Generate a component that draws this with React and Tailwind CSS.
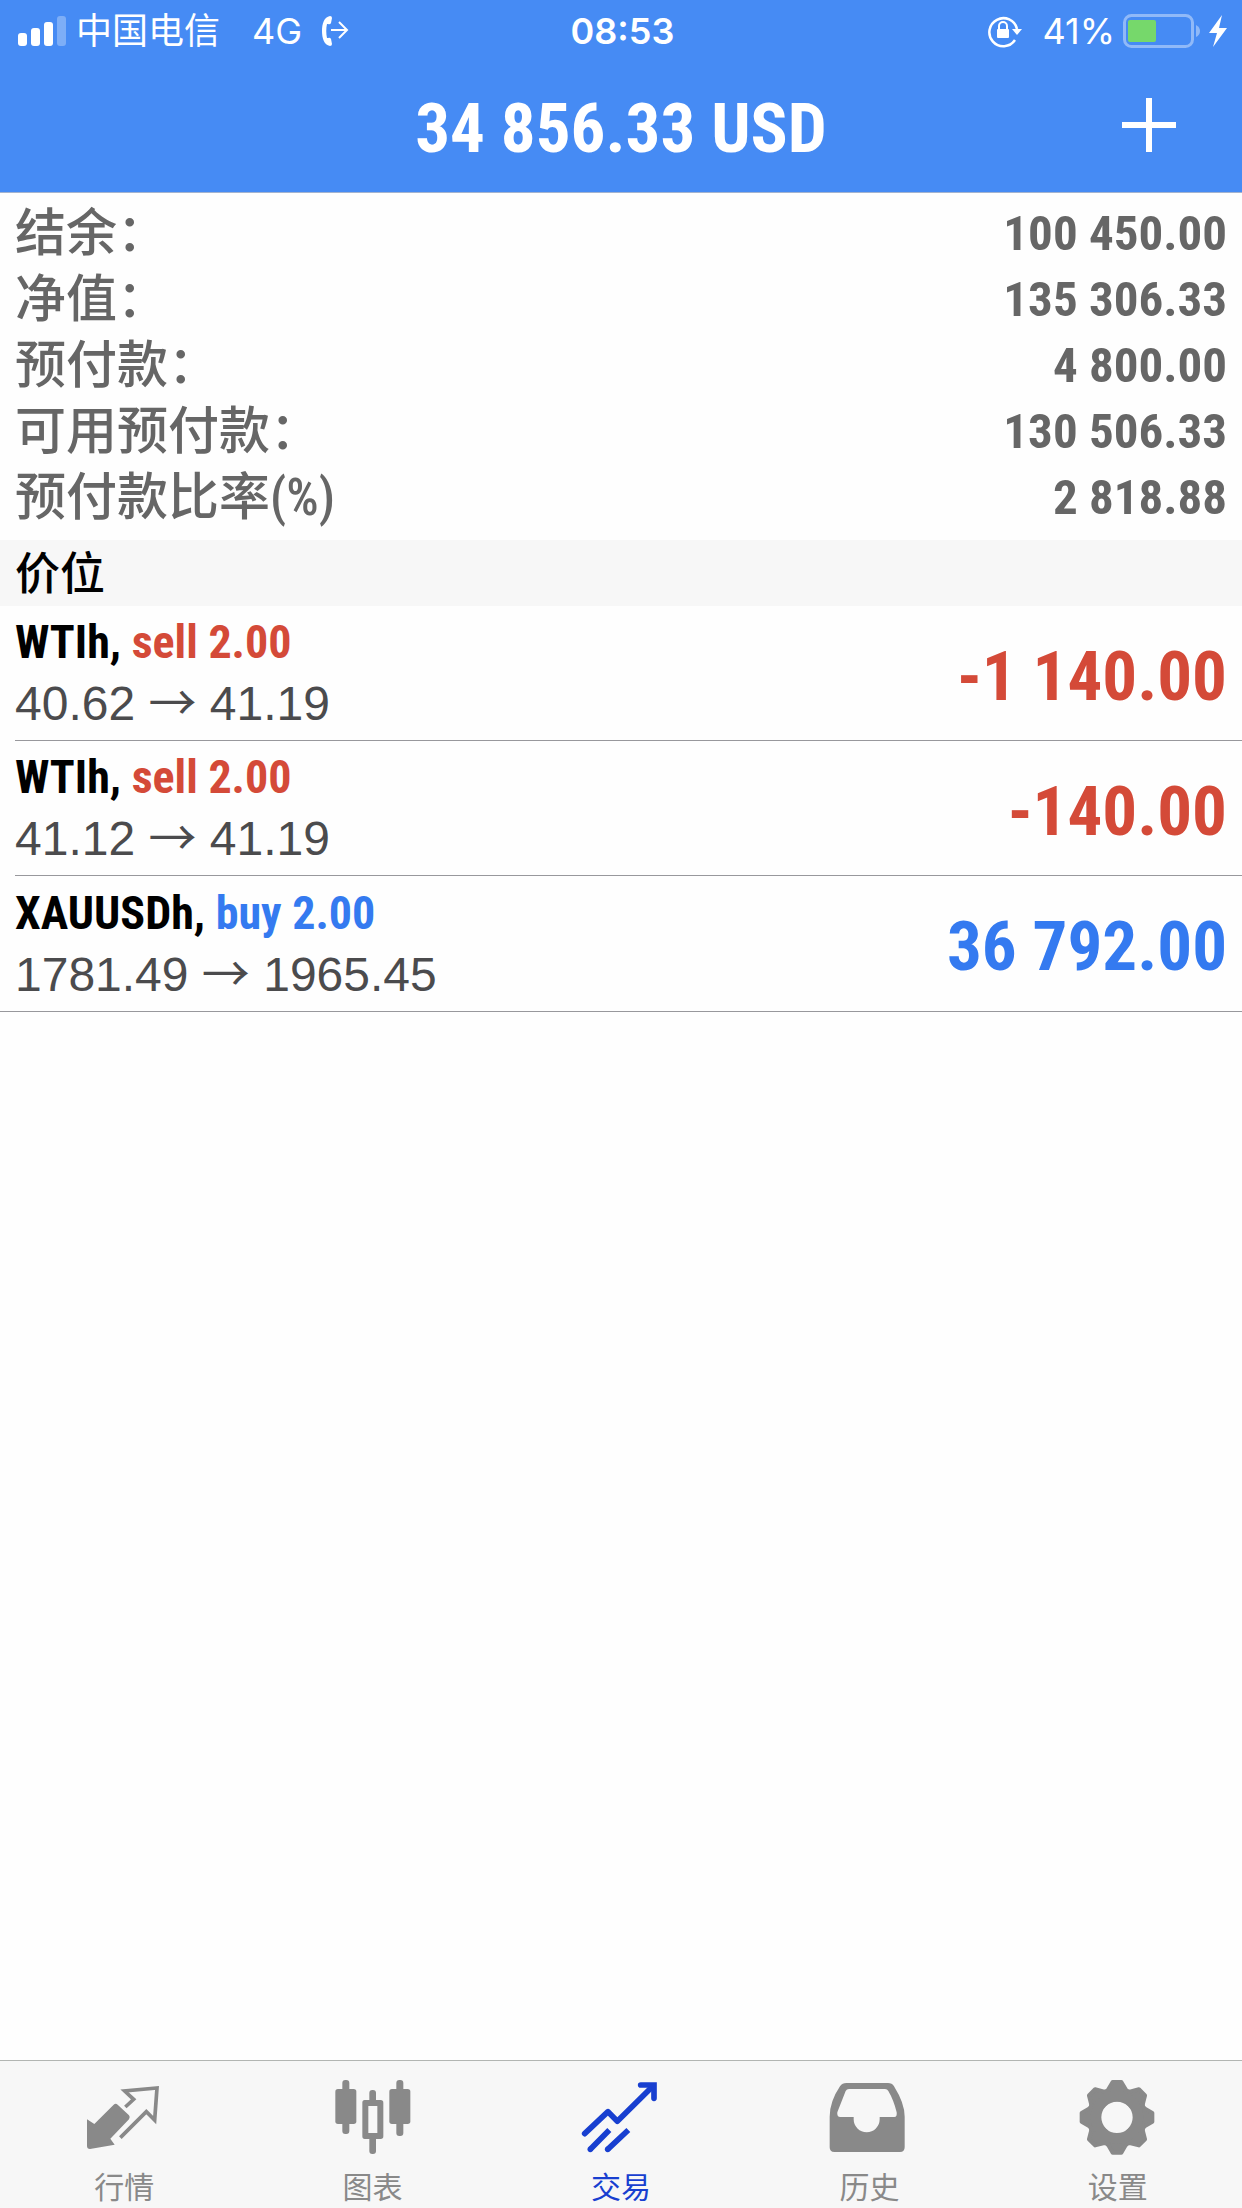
const NARROW = "font-['Liberation_Sans_Narrow','Roboto_Condensed','Noto_Sans_CJK_SC',sans-serif]"

const summary = [
    { label: '结余：', value: '100 450.00' },
    { label: '净值：', value: '135 306.33' },
    { label: '预付款：', value: '4 800.00' },
    { label: '可用预付款：', value: '130 506.33' },
    { label: '预付款比率(%)', value: '2 818.88' },
]

const positions = [
    { id: 1, symbol: 'WTIh', side: 'sell', volume: '2.00', open: '40.62', current: '41.19', profit: '-1 140.00' },
    { id: 2, symbol: 'WTIh', side: 'sell', volume: '2.00', open: '41.12', current: '41.19', profit: '-140.00' },
    { id: 3, symbol: 'XAUUSDh', side: 'buy', volume: '2.00', open: '1781.49', current: '1965.45', profit: '36 792.00' },
]

const tabs = [
    { id: 'quotes', label: '行情', Icon: QuotesIcon },
    { id: 'charts', label: '图表', Icon: ChartsIcon },
    { id: 'trade', label: '交易', Icon: TradeIcon },
    { id: 'history', label: '历史', Icon: HistoryIcon },
    { id: 'settings', label: '设置', Icon: SettingsIcon },
]

function SignalIcon() {
    return (
        <svg width="48" height="32" viewBox="0 0 48 32" fill="white" aria-hidden="true">
            <rect x="0" y="18" width="9" height="13" rx="3" />
            <rect x="13" y="13" width="9" height="18" rx="3" />
            <rect x="26" y="7" width="9" height="24" rx="3" />
            <rect x="39" y="1" width="9" height="30" rx="3" opacity="0.3" />
        </svg>
    )
}

function CallForwardIcon() {
    return (
        <svg width="28" height="32" viewBox="0 0 28 32" fill="white" aria-hidden="true">
            <path d="M8 1 C2 2 0 9 0 16 C0 23 2 30 8 31 Q10 31 10 29 L9 24 Q8 22 6 23 L5 23 C4 19 4 13 5 9 L6 9 Q8 10 9 8 L10 3 Q10 1 8 1 Z" />
            <path d="M9 15 H25 M17 7 L25 15 L17 23" fill="none" stroke="white" strokeWidth="2" />
        </svg>
    )
}

function RotationLockIcon() {
    return (
        <svg width="34" height="34" viewBox="0 0 34 34" fill="none" aria-hidden="true">
            <path d="M27 26 A14 14 0 1 1 29 15" stroke="white" strokeWidth="2.5" />
            <path d="M24 15 H34 L29 21 Z" fill="white" />
            <rect x="9" y="15" width="12" height="9" rx="1" fill="white" />
            <path d="M11 15 V12 A4 4 0 0 1 19 12 V15" stroke="white" strokeWidth="2" />
        </svg>
    )
}

function BatteryIcon() {
    return (
        <svg width="78" height="36" viewBox="0 0 78 36" fill="none" aria-hidden="true">
            <rect x="1.5" y="2.5" width="68" height="31" rx="7" stroke="white" strokeOpacity="0.4" strokeWidth="3" />
            <rect x="5" y="7" width="28" height="22" rx="2" fill="#76d86b" />
            <path d="M73 12 Q77 14 77 18 Q77 22 73 24 Z" fill="white" fillOpacity="0.4" />
        </svg>
    )
}

function BoltIcon() {
    return (
        <svg width="18" height="32" viewBox="0 0 18 32" fill="white" aria-hidden="true">
            <path d="M13 0 L0 18 H8 L4 32 L18 13 H10 Z" />
        </svg>
    )
}

function QuotesIcon() {
    return (
        <svg width="84" height="80" viewBox="126 111 252 240" fill="none" aria-hidden="true">
            <path d="M141 238 L163 252 L221 194 Q227 188 233 194 L267 226 Q272 232 267 238 L211 296 L224 314 L150 327 Q141 327 141 318 Z" fill="currentColor" />
            <path d="M256 201 L281 178 L254 153 L351 144 L344 240 L319 215 L241 293" stroke="currentColor" strokeWidth="11" />
        </svg>
    )
}

function ChartsIcon() {
    return (
        <svg width="84" height="80" viewBox="872 111 252 240" fill="currentColor" aria-hidden="true">
            <rect x="906" y="120" width="21" height="162" rx="9" />
            <rect x="885" y="147" width="63" height="105" rx="8" />
            <rect x="1068" y="120" width="21" height="168" rx="9" />
            <rect x="1047" y="147" width="63" height="105" rx="8" />
            <rect x="987" y="150" width="20" height="40" rx="9" />
            <rect x="987" y="285" width="20" height="57" rx="9" />
            <path fillRule="evenodd" d="M973 180 H1021 Q1029 180 1029 188 V289 Q1029 297 1021 297 H973 Q966 297 966 289 V188 Q966 180 973 180 Z M984 198 V279 H1011 V198 Z" />
        </svg>
    )
}

function TradeIcon() {
    return (
        <svg width="84" height="80" viewBox="117 111 252 240" fill="none" stroke="currentColor" strokeWidth="17" aria-hidden="true">
            <path d="M134 281 L204 215 L232 244 L336 141" strokeLinecap="round" strokeLinejoin="round" />
            <path d="M302 135 H342 V175" strokeLinecap="round" />
            <path d="M151 328 L208 270 M203 328 L265 270" />
            <g fill="currentColor" stroke="none">
                <circle cx="151" cy="328" r="8.5" />
                <circle cx="203" cy="328" r="8.5" />
            </g>
        </svg>
    )
}

function HistoryIcon() {
    return (
        <svg width="84" height="80" viewBox="862 111 252 240" fill="currentColor" aria-hidden="true">
            <path fillRule="evenodd" d="M920 129 H1045 Q1057 129 1063 139 Q1095 190 1095 230 V322 Q1095 336 1081 336 H884 Q870 336 870 322 V230 Q870 185 901 139 Q908 129 920 129 Z M928 147 Q921 147 918 153 L893 217 Q891 231 902 231 H942 V238 A39 39 0 0 0 1020 238 V231 H1064 Q1073 231 1071 217 Q1062 180 1046 153 Q1043 147 1036 147 Z" />
        </svg>
    )
}

function SettingsIcon() {
    return (
        <svg width="84" height="80" viewBox="227 111 252 240" fill="none" aria-hidden="true">
            <g fill="currentColor" stroke="currentColor" strokeWidth="12" strokeLinejoin="round">
                {[0, 45, 90, 135, 180, 225, 270, 315].map((angle) => (
                    <path key={angle} d="M337 126 H363 L376 148 L388 160 L376 178 H324 L312 160 L324 148 Z" transform={`rotate(${angle} 350 232)`} />
                ))}
            </g>
            <circle cx="350" cy="232" r="63" stroke="currentColor" strokeWidth="32" />
        </svg>
    )
}

function StatusBar() {
    return (
        <div className="grid grid-cols-[1fr_auto_1fr] items-center h-[62px] pl-[18px] pr-[15px] text-[36px] leading-none font-['Inter','Noto_Sans_CJK_SC',sans-serif]">
            <div className="flex items-center">
                <SignalIcon />
                <span className="ml-2.5">中国电信</span>
                <span className="ml-8 mr-5">4G</span>
                <CallForwardIcon />
            </div>
            <span className="font-semibold">08:53</span>
            <div className="flex items-center justify-end">
                <RotationLockIcon />
                <span className="ml-5 mr-2">41%</span>
                <BatteryIcon />
                <span className="ml-2"><BoltIcon /></span>
            </div>
        </div>
    )
}

function Position({ position }) {
    const color = position.side === 'sell' ? 'text-[#d44a38]' : 'text-[#347af0]'

    return (
        <li className="pl-[15px] last:pl-0 last:border-b last:border-[#98989c] group">
            <div className="flex items-center justify-between h-[135px] pr-[15px] border-b border-[#98989c] group-last:border-b-0 group-last:pl-[15px]">
                <div>
                    <p className={`${NARROW} font-bold text-[46px] leading-[62px]`}>
                        {position.symbol}, <span className={color}>{position.side} {position.volume}</span>
                    </p>
                    <p className="text-[48px] leading-[62px] text-[#4b4b4d]">
                        {position.open} <span className="font-['Noto_Sans_CJK_SC'] leading-none">→</span> {position.current}
                    </p>
                </div>
                <span className={`${NARROW} ${color} font-bold pt-1.5 text-[69px] leading-none`}>{position.profit}</span>
            </div>
        </li>
    )
}

export default function App() {
    return (
        <div className="min-h-screen flex flex-col bg-[#fefefe] text-black font-['Liberation_Sans','Noto_Sans_CJK_SC',sans-serif]">
            <header className="bg-[#468bf4] text-white border-b border-[#a3b3cf]">
                <StatusBar />
                <div className="grid grid-cols-[1fr_auto_1fr] items-center h-[130px] pb-1 px-[66px]">
                    <h1 className={`${NARROW} col-start-2 pt-1.5 font-bold text-[69px] leading-none`}>34 856.33 USD</h1>
                    <button type="button" aria-label="新订单" className="justify-self-end cursor-pointer">
                        <svg width="54" height="54" viewBox="0 0 54 54" className="block" aria-hidden="true">
                            <path d="M27 0 V54 M0 27 H54" stroke="white" strokeWidth="6" />
                        </svg>
                    </button>
                </div>
            </header>

            <main className="grow">
                <dl className={`${NARROW} px-[15px] pt-[7px] pb-2.5 text-[#666666]`}>
                    {summary.map((row) => (
                        <div key={row.label} className="flex items-center justify-between h-[66px] leading-none">
                            <dt className="text-[51px] font-medium">{row.label}</dt>
                            <dd className="text-[49px] font-bold">{row.value}</dd>
                        </div>
                    ))}
                </dl>

                <h2 className={`${NARROW} flex items-center h-[66px] pt-0.5 px-[15px] bg-[#f7f7f7] text-[45px] leading-none font-medium`}>价位</h2>
                <ul>
                    {positions.map((position) => (
                        <Position key={position.id} position={position} />
                    ))}
                </ul>
            </main>

            <nav className="grid grid-cols-5 h-[148px] bg-[#f7f7f7] border-t border-[#b2b5b2]">
                {tabs.map(({ id, label, Icon }) => (
                    <a
                        key={id}
                        href={`#${id}`}
                        className={`flex flex-col items-center pt-4 gap-4 ${id === 'trade' ? 'text-[#183fd0]' : 'text-[#898989]'}`}
                    >
                        <Icon />
                        <span className={`${NARROW} text-[30px] leading-[30px]`}>{label}</span>
                    </a>
                ))}
            </nav>
        </div>
    )
}
